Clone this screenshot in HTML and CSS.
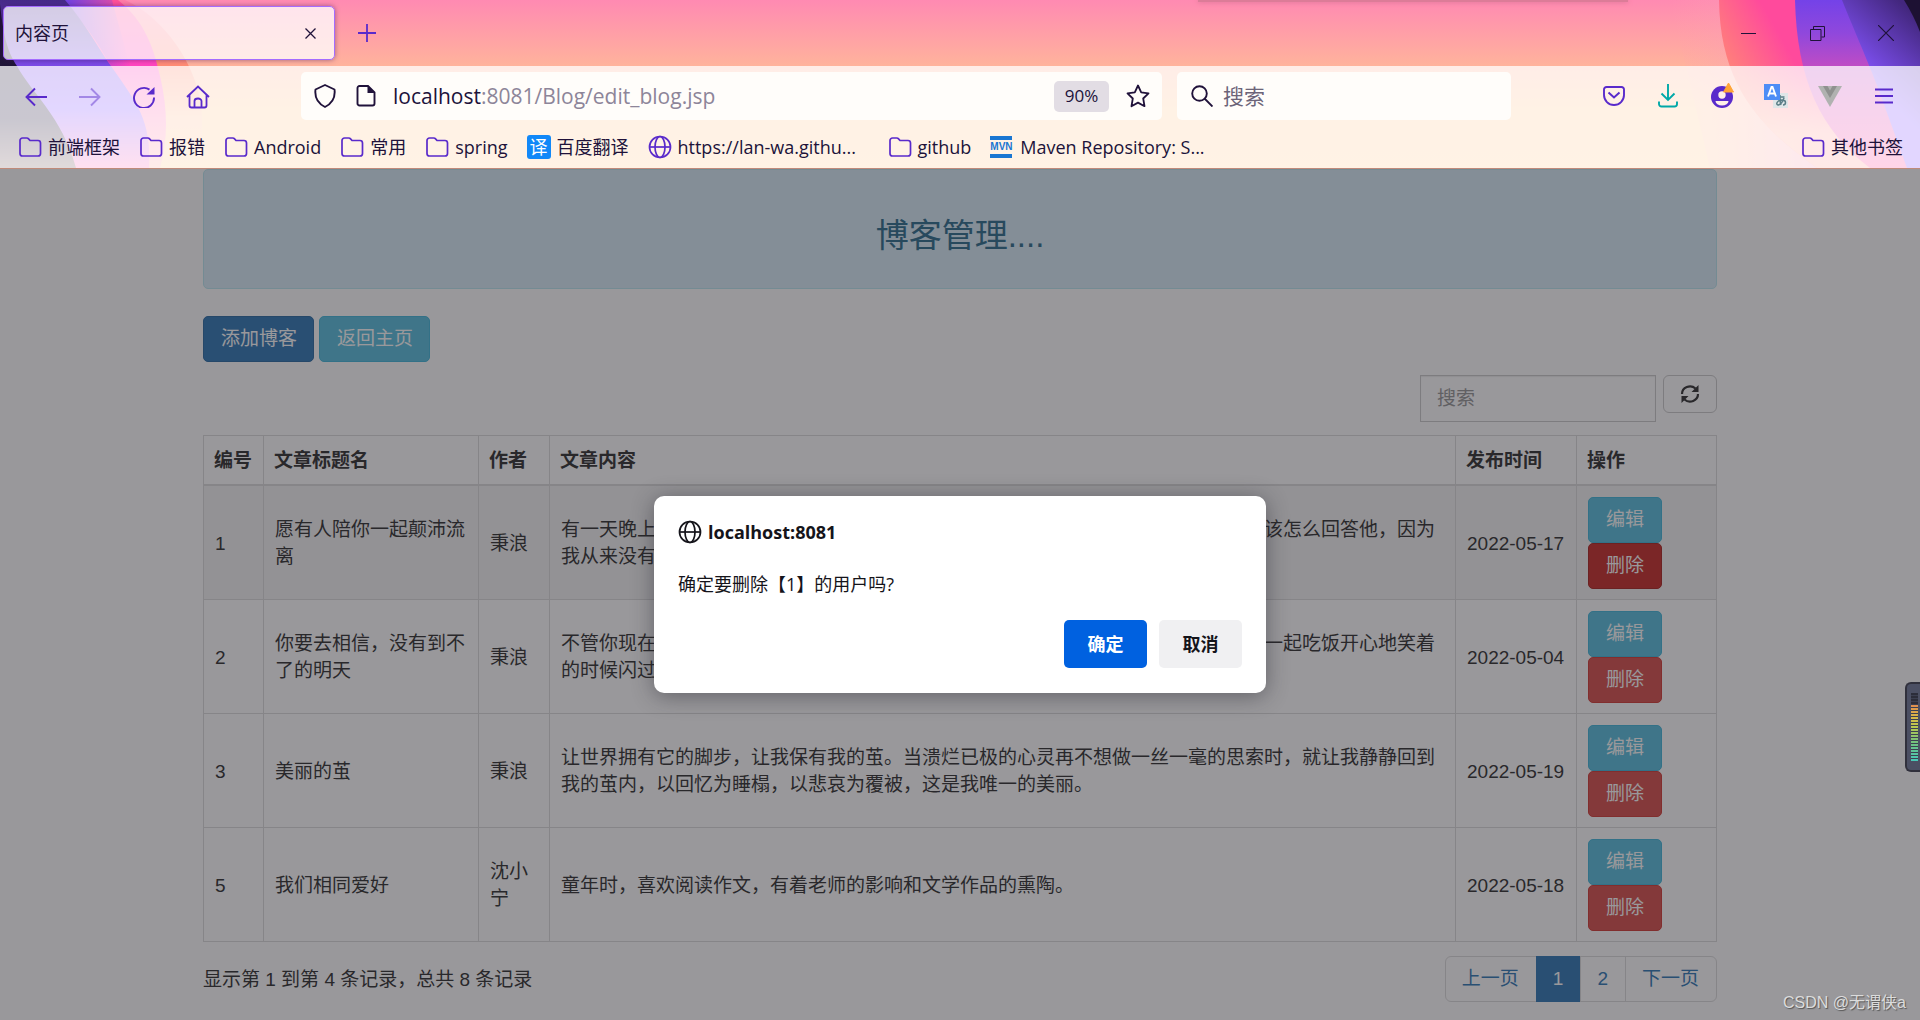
FILE: index.html
```html
<!DOCTYPE html>
<html lang="zh-CN">
<head>
<meta charset="utf-8">
<title>内容页</title>
<link rel="stylesheet" href="styles.css">
</head>
<body>
<svg class="defs" width="0" height="0" aria-hidden="true">
  <symbol id="folder" viewBox="0 0 24 22"><path d="M2 4.5A2.5 2.5 0 0 1 4.500 2h4.200c.8 0 1.400.3 1.900.9L12 4.500h8A2.500 2.500 0 0 1 22.500 7v10.500A2.500 2.500 0 0 1 20 20H4.500A2.500 2.500 0 0 1 2 17.500z" fill="none" stroke="currentColor" stroke-width="1.700"/></symbol>
  <symbol id="globe" viewBox="0 0 24 24"><g fill="none" stroke="currentColor" stroke-width="1.700"><circle cx="12" cy="12" r="10.500"/><ellipse cx="12" cy="12" rx="5" ry="10.500"/><path d="M1.500 12h21"/></g></symbol>
</svg>

<header class="browser">
  <svg class="art art-left" width="240" height="168" viewBox="0 0 240 168" aria-hidden="true">
    <defs>
      <linearGradient id="l-orange" x1="0" y1="0" x2="0" y2="1"><stop offset="0" stop-color="#ff7aa8"/><stop offset=".4" stop-color="#ff8c72"/><stop offset=".7" stop-color="#ffc09a"/><stop offset="1" stop-color="#ffcc94"/></linearGradient>
      <linearGradient id="l-pink" x1="0" y1="0" x2="0" y2="1"><stop offset="0" stop-color="#ff5098"/><stop offset=".4" stop-color="#ff45c0"/><stop offset=".7" stop-color="#ff80b8"/><stop offset="1" stop-color="#ffb0a8"/></linearGradient>
      <linearGradient id="l-mix" x1="0" y1="0" x2="1" y2="0"><stop offset=".1" stop-color="#7242e0"/><stop offset="1" stop-color="#7242e0" stop-opacity="0"/></linearGradient>
      <linearGradient id="l-violet" x1="0" y1="0" x2="0" y2="1"><stop offset="0" stop-color="#472a88"/><stop offset=".4" stop-color="#7c4ce8"/><stop offset=".65" stop-color="#8858ff"/><stop offset="1" stop-color="#ff80c0"/></linearGradient>
      <linearGradient id="l-dark" x1="0" y1="0" x2="0" y2="1"><stop offset="0" stop-color="#1d1133"/><stop offset=".7" stop-color="#22183c"/><stop offset="1" stop-color="#806468"/></linearGradient>
    </defs>
    <path d="M0 0H125C165 18 202 70 202 120V168H0z" fill="url(#l-orange)"/>
    <path d="M0 0H118C146 22 154 50 160 76C168 110 168 140 160 168H0z" fill="url(#l-pink)"/>
    <path d="M60 0H112L130 66H111C92 33 82 20 60 0z" fill="url(#l-mix)"/>
    <path d="M0 0H65C86 24 98 48 111 66C136 102 152 120 149 168H0z" fill="url(#l-violet)"/>
    <path d="M0 4C4 40 8 52 17 66C32 94 62 116 76 168H0z" fill="url(#l-dark)"/>
  </svg>
  <svg class="art art-right" width="400" height="168" viewBox="0 0 400 168" aria-hidden="true">
    <defs>
      <linearGradient id="r-glow" x1="0" y1="0" x2="1" y2="0"><stop offset="0" stop-color="#ffa0b0" stop-opacity="0"/><stop offset="1" stop-color="#f09cc4"/></linearGradient>
      <linearGradient id="r-pink" x1="200" y1="60" x2="270" y2="20" gradientUnits="userSpaceOnUse"><stop offset="0" stop-color="#ff8478"/><stop offset=".8" stop-color="#ff4a9c"/></linearGradient>
      <linearGradient id="r-fade" x1="0" y1="0" x2="0" y2="1"><stop offset=".38" stop-color="#ffa090" stop-opacity="0"/><stop offset=".8" stop-color="#ffb8a0" stop-opacity=".8"/></linearGradient>
      <linearGradient id="r-violet" x1="0" y1="0" x2="0" y2="1"><stop offset="0" stop-color="#7442e8"/><stop offset=".2" stop-color="#9048dc"/><stop offset=".4" stop-color="#c04cc4"/><stop offset="1" stop-color="#ff50a0"/></linearGradient>
      <linearGradient id="r-blue" x1="345" y1="80" x2="400" y2="20" gradientUnits="userSpaceOnUse"><stop offset="0" stop-color="#8555ff"/><stop offset="1" stop-color="#43277e"/></linearGradient>
    </defs>
    <path d="M150 0H320V168H190z" fill="url(#r-glow)"/>
    <path d="M199 0C200 90 245 130 297 168H400V0z" fill="url(#r-pink)"/>
    <path d="M199 0C200 90 245 130 297 168H400V0z" fill="url(#r-fade)"/>
    <path d="M275 0C277 80 300 130 350 168H400V0z" fill="url(#r-violet)"/>
    <path d="M322 0C334 30 350 66 358 88L387 168H400V0z" fill="url(#r-blue)"/>
    <path d="M384 0Q394 16 400 32V0z" fill="#1d1133"/>
  </svg>
  <div class="drop-handle"></div>

  <div class="tabs">
    <div class="tab"><span>内容页</span>
      <button class="icon-btn ink" aria-label="关闭标签页"><svg width="11" height="11" viewBox="0 0 11 11"><path d="M.5.5l10 10M10.500.5l-10 10" stroke="currentColor" stroke-width="1.300"/></svg></button>
    </div>
    <button class="icon-btn" aria-label="新建标签页"><svg width="18" height="18" viewBox="0 0 18 18"><path d="M9 0v18M0 9h18" stroke="currentColor" stroke-width="1.800"/></svg></button>
    <div class="window-controls">
      <button class="icon-btn ink" aria-label="最小化"><svg width="15" height="15" viewBox="0 0 15 15"><path d="M0 7.500h15" stroke="currentColor"/></svg></button>
      <button class="icon-btn ink" aria-label="还原"><svg width="15" height="15" viewBox="0 0 15 15"><path d="M.5 3.500h10.500v11H.5zM3.500 3.500V.5h11v10.500h-3" fill="none" stroke="currentColor"/></svg></button>
      <button class="icon-btn ink" aria-label="关闭"><svg width="16" height="16" viewBox="0 0 16 16"><path d="M0 0l16 16M16 0L0 16" stroke="currentColor" stroke-width="1.200"/></svg></button>
    </div>
  </div>

  <div class="toolbar">
    <nav class="nav-row" aria-label="浏览器工具栏">
      <div class="nav-buttons">
        <button class="icon-btn" aria-label="后退"><svg width="22" height="22" viewBox="0 0 22 22"><path d="M22 11H1.500M10 2.500L1.500 11l8.500 8.500" fill="none" stroke="currentColor" stroke-width="1.900"/></svg></button>
        <button class="icon-btn" aria-label="前进" disabled><svg width="22" height="22" viewBox="0 0 22 22"><path d="M0 11h20.500M12 2.500l8.500 8.500-8.500 8.500" fill="none" stroke="currentColor" stroke-width="1.900"/></svg></button>
        <button class="icon-btn" aria-label="刷新"><svg width="22" height="22" viewBox="0 0 22 22"><path d="M21 11.500A10 10 0 1 1 16.500 3.600" fill="none" stroke="currentColor" stroke-width="1.900"/><path d="M21.500 1v7.500h-8z" fill="currentColor"/></svg></button>
        <button class="icon-btn" aria-label="主页"><svg width="24" height="24" viewBox="0 0 24 24"><path d="M1 12L12 1.500 23 12M3.500 10v10.500A2 2 0 0 0 5.500 22.500h13a2 2 0 0 0 2-2V10M8.500 22.500V16a3.500 2.500 0 0 1 7 0v6.500" fill="none" stroke="currentColor" stroke-width="1.800"/></svg></button>
      </div>
      <div class="url-bar">
        <svg width="22" height="24" viewBox="0 0 22 24"><path d="M11 1l9.500 4.500c1 8-2.500 14-9.500 17.500C4 19.500.5 13.500 1.500 5.500z" fill="none" stroke="currentColor" stroke-width="1.900" stroke-linejoin="round"/></svg>
        <svg width="20" height="22" viewBox="0 0 20 22"><path d="M3.500 1h8.500l6.500 6.500v11a2 2 0 0 1-2 2h-13a2 2 0 0 1-2-2V3a2 2 0 0 1 2-2z" fill="none" stroke="currentColor" stroke-width="1.900"/><path d="M11.500 1v7H18.500z" fill="currentColor"/></svg>
        <div class="url"><b>localhost</b>:8081/Blog/edit_blog.jsp</div>
        <button class="zoom-level">90%</button>
        <button class="icon-btn ink" aria-label="添加书签"><svg width="24" height="24" viewBox="0 0 24 24"><path d="M12 1.500l3.200 6.800 7.300 1-5.300 5.200 1.300 7.700L12 18.600l-6.500 3.600 1.300-7.700L1.500 9.300l7.300-1z" fill="none" stroke="currentColor" stroke-width="1.800" stroke-linejoin="round"/></svg></button>
      </div>
      <label class="search-bar">
        <svg width="22" height="22" viewBox="0 0 22 22"><circle cx="8.500" cy="8.500" r="7.300" fill="none" stroke="currentColor" stroke-width="1.900"/><path d="M13.500 13.500l8 8" stroke="currentColor" stroke-width="1.900"/></svg>
        <input type="text" placeholder="搜索" aria-label="搜索">
      </label>
      <div class="extensions">
        <button class="icon-btn" aria-label="Pocket"><svg width="22" height="20" viewBox="0 0 22 20"><path d="M3.500 1h15a2.500 2.500 0 0 1 2.500 2.500V9a10 10 0 0 1-20 0V3.500A2.500 2.500 0 0 1 3.500 1z" fill="none" stroke="currentColor" stroke-width="1.900"/><path d="M5.500 6.500L11 11.500l5.500-5" fill="none" stroke="currentColor" stroke-width="2"/></svg></button>
        <button class="icon-btn teal" aria-label="下载"><svg width="20" height="24" viewBox="0 0 20 24"><path d="M10 0v16M3.500 9.500L10 16l6.500-6.500M1 17.500V20a2.500 2.500 0 0 0 2.500 2.500h13A2.500 2.500 0 0 0 19 20v-2.500" fill="none" stroke="currentColor" stroke-width="1.900"/></svg></button>
        <button class="icon-btn" aria-label="账户"><svg width="24" height="28" viewBox="0 0 24 28"><circle cx="12" cy="15" r="11" fill="currentColor"/><circle cx="12" cy="13" r="3.700" fill="#fff0e8"/><path d="M5.500 19h13a6.500 4.500 0 0 1-13 0z" fill="#fff0e8"/><path d="M18.500 1l5 9h-10z" fill="#ffa436" stroke="#ffa436" stroke-linejoin="round"/></svg></button>
        <button class="icon-btn" aria-label="翻译"><svg width="24" height="24" viewBox="0 0 24 24"><rect x="9" y="9" width="15" height="15" fill="#dfe6e8"/><path d="M12.500 13h8M16 11c0 4 0 8 1 10M20 14c-1 4-4 7-6 7-3-1 0-5 4-5 5 0 4 5 1 5" fill="none" stroke="#5b7f88" stroke-width="1.500"/><rect width="16" height="16" fill="#4d8df6"/><path d="M4 12.500L7.500 3h1L12 12.500M5.500 9.500h5" fill="none" stroke="#fff" stroke-width="1.900"/></svg></button>
        <button class="icon-btn" aria-label="Vue"><svg width="24" height="22" viewBox="0 0 24 22"><path d="M0 1h24L12 22z" fill="#b0b2b0"/><path d="M5 1h4.500L12 5.500 14.500 1H19l-7 12z" fill="#8f918f"/></svg></button>
        <button class="icon-btn" aria-label="菜单"><svg width="18" height="16" viewBox="0 0 18 16"><path d="M0 1.500h18M0 8h18M0 14.500h18" stroke="currentColor" stroke-width="1.800"/></svg></button>
      </div>
    </nav>
    <nav class="bookmarks" aria-label="书签">
      <a href="#"><svg><use href="#folder"/></svg>前端框架</a>
      <a href="#"><svg><use href="#folder"/></svg>报错</a>
      <a href="#"><svg><use href="#folder"/></svg>Android</a>
      <a href="#"><svg><use href="#folder"/></svg>常用</a>
      <a href="#"><svg><use href="#folder"/></svg>spring</a>
      <a href="#"><span class="fanyi">译</span>百度翻译</a>
      <a href="#" class="long"><svg><use href="#globe"/></svg>https://lan-wa.githu...</a>
      <a href="#"><svg><use href="#folder"/></svg>github</a>
      <a href="#" class="long"><span class="mvn">MVN</span>Maven Repository: S...</a>
      <a href="#" class="other"><svg><use href="#folder"/></svg>其他书签</a>
    </nav>
  </div>
</header>

<div class="viewport">
  <main class="container">
    <div class="banner"><h1>博客管理....</h1></div>
    <div class="actions">
      <button class="btn primary">添加博客</button>
      <button class="btn info">返回主页</button>
    </div>
    <div class="table-tools">
      <input class="filter" type="text" placeholder="搜索" aria-label="搜索文章">
      <button class="refresh" aria-label="刷新列表"><svg width="20" height="20" viewBox="0 0 20 20"><path d="M2 10a8 7.500 0 0 1 13.500-5.500M18 10a8 7.500 0 0 1-13.500 5.500" fill="none" stroke="currentColor" stroke-width="2.200"/><path d="M18.500 1v7h-7zM1.500 19v-7h7z" fill="currentColor"/></svg></button>
    </div>
    <table>
      <colgroup><col class="c-id"><col class="c-title"><col class="c-author"><col><col class="c-date"><col class="c-ops"></colgroup>
      <thead>
        <tr><th>编号</th><th>文章标题名</th><th>作者</th><th>文章内容</th><th>发布时间</th><th>操作</th></tr>
      </thead>
      <tbody>
        <tr class="selected">
          <td>1</td><td>愿有人陪你一起颠沛流离</td><td>秉浪</td>
          <td>有一天晚上，他忽然发来了一条消息问我，你有没有真正地喜欢过一个人，我不知道该怎么回答他，因为我从来没有</td>
          <td>2022-05-17</td>
          <td><button class="btn info">编辑</button><button class="btn danger pressed">删除</button></td>
        </tr>
        <tr>
          <td>2</td><td>你要去相信，没有到不了的明天</td><td>秉浪</td>
          <td>不管你现在有多么难过，总有一天你会和喜欢的人坐在明亮温暖的屋子里，跟着他们一起吃饭开心地笑着的时候闪过</td>
          <td>2022-05-04</td>
          <td><button class="btn info">编辑</button><button class="btn danger">删除</button></td>
        </tr>
        <tr>
          <td>3</td><td>美丽的茧</td><td>秉浪</td>
          <td>让世界拥有它的脚步，让我保有我的茧。当溃烂已极的心灵再不想做一丝一毫的思索时，就让我静静回到我的茧内，以回忆为睡榻，以悲哀为覆被，这是我唯一的美丽。</td>
          <td>2022-05-19</td>
          <td><button class="btn info">编辑</button><button class="btn danger">删除</button></td>
        </tr>
        <tr>
          <td>5</td><td>我们相同爱好</td><td>沈小宁</td>
          <td>童年时，喜欢阅读作文，有着老师的影响和文学作品的熏陶。</td>
          <td>2022-05-18</td>
          <td><button class="btn info">编辑</button><button class="btn danger">删除</button></td>
        </tr>
      </tbody>
    </table>
    <div class="table-footer">
      <span>显示第 1 到第 4 条记录，总共 8 条记录</span>
      <nav class="pagination" aria-label="分页">
        <a href="#">上一页</a><a href="#" class="active">1</a><a href="#">2</a><a href="#">下一页</a>
      </nav>
    </div>
  </main>
  <div class="overlay">
    <div class="dialog" role="alertdialog" aria-labelledby="dialog-title" aria-describedby="dialog-text">
      <div class="dialog-title" id="dialog-title"><svg><use href="#globe"/></svg>localhost:8081</div>
      <p id="dialog-text">确定要删除【1】的用户吗?</p>
      <div class="dialog-buttons">
        <button class="ok">确定</button>
        <button>取消</button>
      </div>
    </div>
  </div>
  <div class="meter"><div class="bars"></div></div>
  <div class="watermark">CSDN @无谓侠a</div>
</div>
</body>
</html>
```

FILE: styles.css
```css
* { box-sizing: border-box; }

body {
  margin: 0;
  min-height: 100vh;
  display: flex;
  flex-direction: column;
  font-family: "Liberation Sans", "Noto Sans CJK SC", sans-serif;
  font-size: 19px;
  line-height: 27px;
  color: #333;
  background: #fff;
}

button, input { font: inherit; color: inherit; }
button { border: 0; background: none; padding: 0; }
svg { display: block; flex: none; }
.defs { position: absolute; }

/* browser chrome */
.browser {
  position: relative;
  overflow: hidden;
  font-family: "Open Sans", "Noto Sans CJK SC", sans-serif;
  font-size: 18px;
  line-height: 24px;
  color: #20123a;
  background: linear-gradient(#ff8ab2, #ffb39c 66px, #ffc892 110px, #ffcb92);
  border-bottom: 1px solid #c08a7a;
}
.art { position: absolute; top: 0; }
.art-left { left: 0; }
.art-right { right: 0; }
.drop-handle {
  position: absolute;
  top: 0;
  left: 1198px;
  width: 430px;
  height: 2px;
  background: #dc7c98;
  box-shadow: 0 0 5px #c86c88;
}

.tabs {
  position: relative;
  display: flex;
  align-items: center;
  height: 66px;
  padding: 0 10px 0 3px;
}
.tab {
  display: flex;
  align-items: center;
  justify-content: space-between;
  width: 332px;
  height: 54px;
  margin-right: 15px;
  padding: 0 11px;
  border: 1px solid #a56cff;
  border-radius: 5px;
  background: rgba(255, 255, 255, .76);
  box-shadow: 0 0 5px rgba(60, 20, 90, .5);
}
.icon-btn {
  display: grid;
  place-items: center;
  width: 34px;
  height: 34px;
  color: #592acb;
}
.icon-btn:disabled { opacity: .45; }
.icon-btn.ink { color: #20123a; }
.icon-btn.teal { color: #00a8a8; }
.tab .icon-btn { width: 26px; }
.window-controls { display: flex; gap: 35px; margin-left: auto; padding-right: 7px; }

.toolbar {
  position: relative;
  background: rgba(255, 255, 255, .76);
}
.nav-row { display: flex; align-items: center; height: 60px; padding-right: 19px; }
.nav-buttons { display: flex; gap: 20px; padding: 2px 86px 0 19px; }
.url-bar, .search-bar {
  display: flex;
  align-items: center;
  height: 48px;
  border-radius: 5px;
  background: #fffdfa;
}
.url-bar { flex: 1; gap: 20px; padding: 0 7px 0 13px; font-size: 21px; }
.url { flex: 1; color: #8d8599; white-space: nowrap; margin-left: -3px; }
.url b { font-weight: 400; color: #20123a; }
.zoom-level {
  width: 55px;
  height: 31px;
  margin-right: -8px;
  border-radius: 5px;
  background: #e2dde4;
  font-size: 17px;
}
.search-bar { width: 334px; gap: 10px; margin: 0 86px 0 15px; padding: 0 14px; font-size: 21px; }
.search-bar input { flex: 1; min-width: 0; border: 0; padding: 0; background: none; outline: 0; }
.search-bar input::placeholder { color: #6c6478; opacity: 1; }
.extensions { display: flex; gap: 20px; }

.bookmarks {
  display: flex;
  align-items: center;
  gap: 19px;
  height: 42px;
  padding: 0 17px 0 18px;
}
.bookmarks a {
  display: flex;
  align-items: center;
  gap: 6px;
  color: inherit;
  text-decoration: none;
  white-space: nowrap;
}
.bookmarks svg { width: 24px; height: 24px; color: #592acb; }
.bookmarks .long { width: 221px; }
.bookmarks .other { margin-left: auto; }
.fanyi {
  width: 24px;
  height: 24px;
  border-radius: 3px;
  background: #1188f8;
  color: #fff;
  text-align: center;
}
.mvn {
  width: 22px;
  height: 22px;
  margin-right: 2px;
  border: solid #1976d2;
  border-width: 4px 0;
  color: #1976d2;
  font: bold 10px/14px "Liberation Sans", sans-serif;
  text-align: center;
}

/* page */
.viewport { position: relative; flex: 1; overflow: hidden; }
.container { max-width: 1514px; margin: 0 auto; padding-bottom: 17px; }
.banner {
  display: grid;
  place-items: center;
  height: 120px;
  padding-top: 14px;
  border: 1px solid #bce8f1;
  border-radius: 5px;
  background: #d9edf7;
  color: #31708f;
}
h1 { margin: 0; font-size: 33px; line-height: 36px; font-weight: 400; }
.actions { display: flex; gap: 5px; padding: 27px 0 13px; }
.btn {
  display: block;
  height: 46px;
  padding: 0 16px 2px 17px;
  border: 1px solid;
  border-radius: 5px;
  color: #fff;
}
.primary { background: #337ab7; border-color: #2e6da4; }
.info { background: #5bc0de; border-color: #46b8da; }
.danger { background: #d9534f; border-color: #d43f3a; }
.danger.pressed { background: #c9302c; border-color: #ac2925; }
td .btn { padding: 0 17px 1px; }

.table-tools { display: flex; justify-content: flex-end; align-items: flex-start; gap: 7px; }
.filter {
  width: 236px;
  height: 47px;
  padding: 0 16px;
  border: 1px solid #ccc;
  box-shadow: inset 0 1px 1px rgba(0, 0, 0, .075);
}
.filter::placeholder { color: #999; opacity: 1; }
.refresh {
  display: grid;
  place-items: center;
  width: 54px;
  height: 38px;
  border: 1px solid #ccc;
  border-radius: 6px;
}

table {
  width: 100%;
  margin-top: 13px;
  border-collapse: collapse;
  table-layout: fixed;
}
.c-id { width: 60px; }
.c-title { width: 215px; }
.c-author { width: 71px; }
.c-date { width: 121px; }
.c-ops { width: 140px; }
th, td { border: 1px solid #ddd; padding: 11px 10px 10px 11px; text-align: left; }
th { padding-left: 10px; }
td { line-break: anywhere; }
td:nth-child(5) { white-space: nowrap; }
th { border-bottom-width: 2px; }
.selected { background: #f5f5f5; }

.table-footer {
  display: flex;
  justify-content: space-between;
  align-items: center;
  padding-top: 14px;
}
.pagination { display: flex; }
.pagination a {
  height: 46px;
  padding: 8px 17px 8px 16px;
  margin-left: -1px;
  border: 1px solid #ddd;
  color: #337ab7;
  text-decoration: none;
}
.pagination a:first-child { border-radius: 6px 0 0 6px; }
.pagination a:last-child { border-radius: 0 6px 6px 0; }
.pagination .active { background: #337ab7; border-color: #337ab7; color: #fff; }

/* modal */
.overlay {
  position: absolute;
  inset: 0;
  display: flex;
  justify-content: center;
  align-items: flex-start;
  padding-top: 327px;
  background: rgba(28, 27, 34, .45);
}
.dialog {
  width: 612px;
  padding: 23px 24px 25px;
  border-radius: 10px;
  background: #fff;
  color: #15141a;
  font-family: "Open Sans", "Noto Sans CJK SC", sans-serif;
  font-size: 18px;
  line-height: 26px;
  box-shadow: 0 3px 22px rgba(30, 30, 40, .45);
}
.dialog-title { display: flex; align-items: center; gap: 6px; font-weight: 700; }
.dialog-title svg { width: 24px; height: 24px; }
.dialog p { margin: 26px 0 23px; }
.dialog-buttons { display: flex; justify-content: flex-end; gap: 12px; }
.dialog-buttons button {
  width: 83px;
  height: 48px;
  border-radius: 5px;
  background: #f0f0f2;
  font-weight: 700;
}
.dialog-buttons .ok { background: #0061e0; color: #fff; }

/* desktop widget and watermark */
.meter {
  position: absolute;
  right: 0;
  top: 513px;
  width: 15px;
  height: 90px;
  padding: 9px 2px 9px 4px;
  border: 2px solid #30303c;
  border-right: 0;
  border-radius: 6px 0 0 6px;
  background: #4b4f63;
}
.bars {
  height: 100%;
  background:
    repeating-linear-gradient(transparent 0 2px, #3c3f50 2px 3px),
    linear-gradient(#2c2d3a 11px, #e08850 11px, #d8b848 24px, #b8c850 34px, #70c080 50px, #48c8b8);
}
.watermark {
  position: absolute;
  right: 14px;
  bottom: 5px;
  font-size: 16px;
  line-height: 24px;
  color: #dcdcdc;
  text-shadow: 1px 1px 1px #555;
}
```
